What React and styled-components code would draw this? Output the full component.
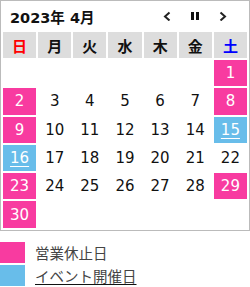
import React from 'react';
import styled, { createGlobalStyle } from 'styled-components';

const GlobalStyle = createGlobalStyle`
  html, body {
    margin: 0;
    padding: 0;
    background: #fff;
  }
  body {
    font-family: "DejaVu Sans", "Noto Sans CJK JP", sans-serif;
  }
`;

const Wrapper = styled.div`
  width: 250px;
`;

const Calendar = styled.div`
  width: 250px;
  box-sizing: border-box;
  border: 1px solid #bbb;
`;

const TitleBar = styled.div`
  height: 29px;
  display: flex;
  align-items: center;
  padding-left: 9px;
`;

const Title = styled.div`
  font-size: 14.5px;
  font-weight: bold;
  color: #111;
  flex: 1;
  padding-top: 1px;
`;

const Nav = styled.div`
  display: flex;
  align-items: center;
  margin-right: 12px;
  padding-top: 1px;
`;

const NavButton = styled.span`
  width: 28px;
  height: 20px;
  display: flex;
  align-items: center;
  justify-content: center;
`;

const Grid = styled.div`
  display: grid;
  grid-template-columns: repeat(7, 1fr);
  grid-template-rows: 26px repeat(6, 26.3px);
  gap: 2px;
  padding: 2px;
`;

const DayHead = styled.div`
  background: #ddd;
  display: flex;
  align-items: center;
  justify-content: center;
  font-size: 15px;
  font-weight: bold;
  color: ${p => p.color || '#111'};
`;

const DateCell = styled.div`
  display: flex;
  align-items: center;
  justify-content: center;
  font-size: 15px;
  background: ${p => p.kind === 'closed' ? '#f83ba0' : p.kind === 'event' ? '#68bdea' : 'transparent'};
  color: ${p => p.kind ? '#fff' : '#111'};
  text-decoration: ${p => p.kind === 'event' ? 'underline' : 'none'};
  text-underline-offset: 3px;
  text-decoration-thickness: 1px;
`;

const Legend = styled.div`
  margin-top: 11px;
  display: flex;
  flex-direction: column;
  gap: 2px;
`;

const LegendRow = styled.div`
  display: flex;
  align-items: center;
  gap: 10px;
`;

const Swatch = styled.span`
  width: 25px;
  height: 21px;
  background: ${p => p.color};
`;

const LegendText = styled.span`
  font-size: 14.5px;
  color: #444;
  font-family: "Noto Sans CJK JP", sans-serif;
  line-height: 21px;
  text-decoration: ${p => p.link ? 'underline' : 'none'};
  text-decoration-color: #111;
  text-underline-offset: 2px;
`;

const days = [
  { label: '日', color: '#f00' },
  { label: '月' },
  { label: '火' },
  { label: '水' },
  { label: '木' },
  { label: '金' },
  { label: '土', color: '#00f' },
];

const closed = [1, 2, 8, 9, 23, 29, 30];
const events = [15, 16];

const cells = [];
for (let i = 0; i < 6; i++) cells.push(null);
for (let d = 1; d <= 30; d++) cells.push(d);

const Chevron = ({ dir }) => (
  <svg width="8" height="10" viewBox="0 0 8 10">
    <path
      d={dir === 'left' ? 'M6.5 1.5 L2 5.5 L6.5 9.5' : 'M1.5 1.5 L6 5.5 L1.5 9.5'}
      fill="none"
      stroke="#222"
      strokeWidth="2"
    />
  </svg>
);

const Pause = () => (
  <svg width="8" height="8" viewBox="0 0 8 8">
    <rect x="0" y="0" width="3" height="8" fill="#111" />
    <rect x="5" y="0" width="3" height="8" fill="#111" />
  </svg>
);

export default function App() {
  return (
    <Wrapper>
      <GlobalStyle />
      <Calendar>
        <TitleBar>
          <Title>2023年 4月</Title>
          <Nav>
            <NavButton><Chevron dir="left" /></NavButton>
            <NavButton><Pause /></NavButton>
            <NavButton><Chevron dir="right" /></NavButton>
          </Nav>
        </TitleBar>
        <Grid>
          {days.map(d => (
            <DayHead key={d.label} color={d.color}>{d.label}</DayHead>
          ))}
          {cells.map((d, i) => {
            if (!d) return <DateCell key={'e' + i} />;
            const kind = closed.includes(d) ? 'closed' : events.includes(d) ? 'event' : null;
            return <DateCell key={d} kind={kind}>{d}</DateCell>;
          })}
        </Grid>
      </Calendar>
      <Legend>
        <LegendRow>
          <Swatch color="#f83ba0" />
          <LegendText>営業休止日</LegendText>
        </LegendRow>
        <LegendRow>
          <Swatch color="#68bdea" />
          <LegendText link>イベント開催日</LegendText>
        </LegendRow>
      </Legend>
    </Wrapper>
  );
}
